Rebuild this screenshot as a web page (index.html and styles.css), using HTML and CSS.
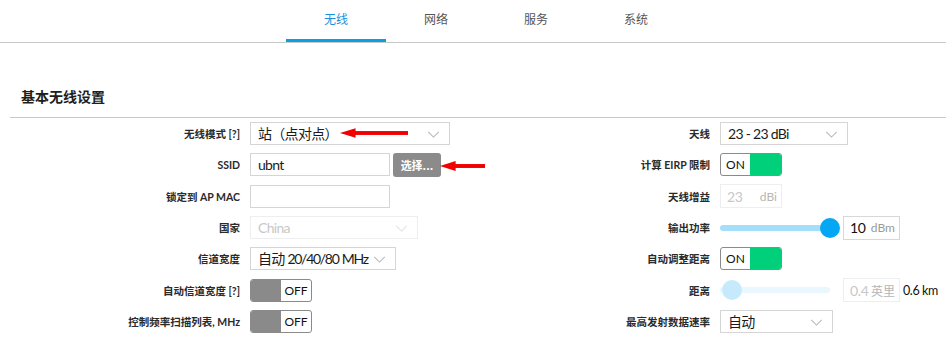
FILE: index.html
```html
<!DOCTYPE html>
<html lang="zh">
<head>
<meta charset="utf-8">
<link rel="stylesheet" href="styles.css">
</head>
<body>
<nav class="tabs">
  <a class="tab active">无线</a>
  <a class="tab">网络</a>
  <a class="tab">服务</a>
  <a class="tab">系统</a>
</nav>
<h2 class="section-title">基本无线设置</h2>
<div class="form">
  <div class="col">
    <label class="lbl">无线模式 [?]</label>
    <div class="ctl">
      <div class="select w200">站（点对点）<svg class="chev" viewBox="0 0 14 8"><path d="M1 1l6 6 6-6"/></svg></div>
      <svg class="arrow a1" viewBox="0 0 70 12"><polygon points="0,6 16,1 16,11" /><rect x="14" y="4" width="56" height="4"/></svg>
    </div>
    <label class="lbl">SSID</label>
    <div class="ctl">
      <div class="input w140">ubnt</div>
      <button class="btn">选择...</button>
      <svg class="arrow a2" viewBox="0 0 46 12"><polygon points="0,6 16,1 16,11" /><rect x="14" y="4" width="32" height="4"/></svg>
    </div>
    <label class="lbl">锁定到 AP MAC</label>
    <div class="ctl"><div class="input w140"></div></div>
    <label class="lbl">国家</label>
    <div class="ctl"><div class="select w168 disabled">China<svg class="chev" viewBox="0 0 14 8"><path d="M1 1l6 6 6-6"/></svg></div></div>
    <label class="lbl">信道宽度</label>
    <div class="ctl"><div class="select w146">自动 <span class="tight">20/40/80 MHz</span><svg class="chev" viewBox="0 0 14 8"><path d="M1 1l6 6 6-6"/></svg></div></div>
    <label class="lbl">自动信道宽度 [?]</label>
    <div class="ctl"><div class="toggle off"><span class="knob"></span><span class="tt">OFF</span></div></div>
    <label class="lbl">控制频率扫描列表, MHz</label>
    <div class="ctl"><div class="toggle off"><span class="knob"></span><span class="tt">OFF</span></div></div>
  </div>
  <div class="col">
    <label class="lbl">天线</label>
    <div class="ctl"><div class="select w128">23 - 23 dBi<svg class="chev" viewBox="0 0 14 8"><path d="M1 1l6 6 6-6"/></svg></div></div>
    <label class="lbl">计算 EIRP 限制</label>
    <div class="ctl"><div class="toggle on"><span class="tt">ON</span><span class="knob"></span></div></div>
    <label class="lbl">天线增益</label>
    <div class="ctl"><div class="unit-input disabled w62"><span class="val">23</span><span class="unit">dBi</span></div></div>
    <label class="lbl">输出功率</label>
    <div class="ctl">
      <div class="slider"><div class="track"></div><div class="thumb" style="left: 100%"></div></div>
      <div class="unit-input w57"><span class="val">10</span><span class="unit">dBm</span></div>
    </div>
    <label class="lbl">自动调整距离</label>
    <div class="ctl"><div class="toggle on"><span class="tt">ON</span><span class="knob"></span></div></div>
    <label class="lbl">距离</label>
    <div class="ctl">
      <div class="slider light"><div class="track"></div><div class="thumb" style="left: 11%"></div></div>
      <div class="unit-input disabled w57"><span class="val">0.4</span><span class="unit">英里</span></div>
      <span class="km">0.6 km</span>
    </div>
    <label class="lbl">最高发射数据速率</label>
    <div class="ctl"><div class="select w113">自动<svg class="chev" viewBox="0 0 14 8"><path d="M1 1l6 6 6-6"/></svg></div></div>
  </div>
</div>
</body>
</html>
```
FILE: styles.css
```css
* { box-sizing: border-box; }
body {
  margin: 0;
  background: #fff;
  font-family: "Lato", "Noto Sans CJK SC", sans-serif;
  color: #222;
}
.tabs {
  display: flex;
  padding-left: 286px;
  height: 43px;
  border-bottom: 1px solid #c9c9c9;
}
.tab {
  width: 100px;
  height: 42px;
  line-height: 39px;
  text-align: center;
  font-size: 12px;
  color: #555;
  border-bottom: 3px solid transparent;
}
.tab.active {
  color: #1a8fe0;
  border-bottom-color: #0a9ee3;
}
.section-title {
  margin: 44px 0 0 10px;
  padding: 0 0 10px 11px;
  font-size: 14px;
  line-height: 20px;
  font-weight: 700;
  color: #1e1e1e;
  border-bottom: 1px solid #c9c9c9;
}
.form {
  display: grid;
  grid-template-columns: 470px 1fr;
}
.col {
  display: grid;
  grid-template-columns: 240px 1fr;
  grid-auto-rows: 31.3px;
  column-gap: 10px;
  align-items: center;
}
.lbl {
  text-align: right;
  font-size: 10.5px;
  font-weight: 700;
  color: #2a2a2a;
  white-space: nowrap;
}
.ctl {
  position: relative;
  display: flex;
  align-items: center;
  height: 100%;
}
.select, .input {
  position: relative;
  height: 23px;
  border: 1px solid #d5d5d5;
  font-size: 14px;
  letter-spacing: -0.7px;
  line-height: 21px;
  padding-left: 7px;
  color: #1a1a1a;
  white-space: nowrap;
}
.tight { letter-spacing: -1.3px; word-spacing: 1px; }
.select.disabled { border-color: #eee; color: #c8c8c8; }
.chev {
  position: absolute;
  right: 9px;
  top: 8px;
  width: 13px;
  height: 7px;
  fill: none;
  stroke: #b8b8b8;
  stroke-width: 1.2;
}
.disabled .chev { stroke: #e2e2e2; }
.w200 { width: 200px; }
.w168 { width: 168px; }
.w146 { width: 146px; }
.w140 { width: 140px; }
.w128 { width: 128px; }
.w113 { width: 113px; }
.w62 { width: 62px; }
.w57 { width: 57px; }
.btn {
  margin-left: 3px;
  width: 48px;
  height: 24px;
  border: none;
  border-radius: 3px;
  background: #8b8b8b;
  color: #fff;
  font-family: "Noto Sans CJK SC", sans-serif;
  font-size: 11px;
  font-weight: 700;
  padding: 0;
}
.arrow {
  position: absolute;
  fill: #f00000;
}
.a1 { left: 90px; top: 9px; width: 68px; height: 12px; }
.a2 { left: 190px; top: 11px; width: 45px; height: 12px; }
.toggle {
  display: flex;
  width: 62px;
  height: 23px;
  border: 1px solid #8a8a8a;
  border-radius: 3px;
  overflow: hidden;
  font-size: 12px;
}
.toggle .knob { width: 30px; }
.toggle .tt {
  flex: 1;
  text-align: center;
  line-height: 21px;
  color: #111;
}
.toggle.off .knob { background: #8a8a8a; }
.toggle.on .knob { background: #00d07a; width: 31px; }
.unit-input {
  display: flex;
  align-items: center;
  justify-content: space-between;
  height: 24px;
  border: 1px solid #d8d8d8;
  padding: 0 4px 0 6px;
  white-space: nowrap;
}
.unit-input .val { font-size: 14px; letter-spacing: -0.3px; color: #111; }
.unit-input .unit { font-size: 12px; color: #9a9a9a; }
.unit-input.disabled { border-color: #eee; }
.unit-input.disabled .val { color: #c8c8c8; }
.unit-input.disabled .unit { color: #b5b5b5; }
.slider {
  position: relative;
  width: 110px;
  height: 20px;
  margin-right: 13px;
}
.slider .track {
  position: absolute;
  left: 0;
  right: 0;
  top: 7px;
  height: 6px;
  border-radius: 3px;
  background: #a4dffa;
}
.slider .thumb {
  position: absolute;
  top: 0;
  width: 20px;
  height: 20px;
  margin-left: -10px;
  border-radius: 50%;
  background: #04a7f3;
}
.slider.light .track { background: #eaf7fe; }
.slider.light .thumb { background: #c6eafc; }
.km {
  margin-left: 3px;
  font-size: 12.5px;
  letter-spacing: -0.4px;
  color: #111;
}
```
